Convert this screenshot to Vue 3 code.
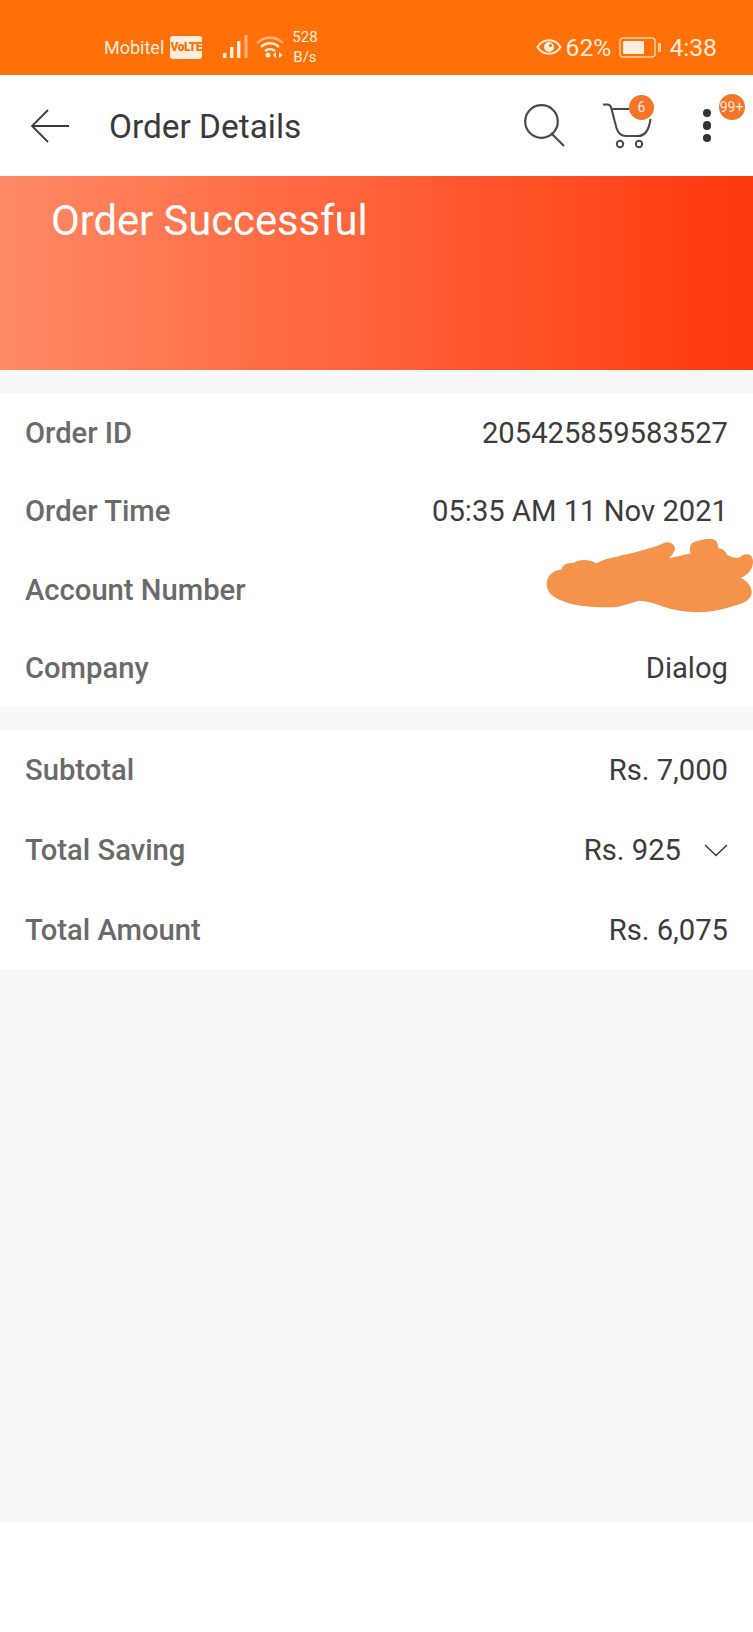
<script setup>
const card1 = [
  { label: 'Order ID', value: '205425859583527', h: 79 },
  { label: 'Order Time', value: '05:35 AM 11 Nov 2021', h: 78 },
  { label: 'Account Number', value: '', h: 79 },
  { label: 'Company', value: 'Dialog', h: 78 },
]
const card2 = [
  { label: 'Subtotal', value: 'Rs. 7,000', h: 80 },
  { label: 'Total Saving', value: 'Rs. 925', h: 80, chevron: true },
  { label: 'Total Amount', value: 'Rs. 6,075', h: 79 },
]
</script>

<template>
  <div class="page">
    <header class="status">
      <div class="status-left">
        <span class="carrier">Mobitel</span>
        <span class="volte">VoLTE</span>
        <svg class="signal" width="25" height="24" viewBox="0 0 25 24">
          <rect x="0" y="18" width="3.400" height="5" fill="#ffeedd" />
          <rect x="7" y="12" width="3.400" height="11" fill="#ffeedd" />
          <rect x="14" y="6" width="3.400" height="17" fill="#ffeedd" />
          <rect x="21.500" y="0" width="3" height="23" fill="#ffb27a" />
        </svg>
        <svg class="wifi" width="28" height="24" viewBox="0 0 28 24" fill="none">
          <path d="M1 8 C8 1 20 1 27 8" stroke="#ffb27a" stroke-width="2.400" />
          <path d="M5 12 C10 7 18 7 23 12" stroke="#ffeedd" stroke-width="2.400" />
          <path d="M9 16 C12 13.500 16 13.500 19 16" stroke="#ffeedd" stroke-width="2.400" />
          <circle cx="12" cy="20" r="2.500" fill="#ffeedd" />
          <path d="M20 17 L17 20 L20 23 Z" fill="#ffeedd" />
          <path d="M23 17 L26.500 20 L23 23 Z" fill="#ffeedd" />
        </svg>
        <span class="speed">528<br />B/s</span>
      </div>
      <div class="status-right">
        <svg class="eye" width="26" height="20" viewBox="0 0 26 20" fill="none">
          <path d="M1.500 10 C7 1 19 1 24.500 10 C19 19 7 19 1.500 10 Z" stroke="#ffeedd" stroke-width="2" />
          <circle cx="13" cy="10" r="5" fill="#ffeedd" />
          <circle cx="14.500" cy="8.500" r="1.600" fill="#ff7108" />
        </svg>
        <span class="pct">62%</span>
        <svg class="battery" width="42" height="21" viewBox="0 0 42 21" fill="none">
          <rect x="1" y="1" width="35" height="19" rx="3" stroke="#ffd3ad" stroke-width="1.400" />
          <rect x="4" y="4" width="21" height="13" rx="1" fill="#ffeedd" />
          <rect x="39" y="6" width="3" height="9" rx="1" fill="#ffd3ad" />
        </svg>
        <span class="time">4:38</span>
      </div>
    </header>

    <nav class="nav">
      <div class="nav-left">
        <svg class="back" width="40" height="34" viewBox="0 0 40 34" fill="none">
          <path d="M18 1 L2 17 L18 33 M2 17 H39" stroke="#3a3a3a" stroke-width="1.800" />
        </svg>
        <h1 class="title">Order Details</h1>
      </div>
      <div class="nav-right">
        <svg class="search" width="41" height="43" viewBox="0 0 41 43" fill="none">
          <circle cx="17.500" cy="17.500" r="16.300" stroke="#4a4a4a" stroke-width="2.200" />
          <path d="M27 29 L40 42" stroke="#4a4a4a" stroke-width="2.200" />
        </svg>
        <div class="cart">
          <svg width="49" height="46" viewBox="0 0 49 46" fill="none">
            <path d="M0 1.500 H4 C6.500 1.500 8 3 8.500 6 L13.500 25 C15 30 18 33 23 33 H35 C42 33 46 27 47.500 16" stroke="#4a4a4a" stroke-width="2.100" />
            <path d="M8.500 6 H26" stroke="#4a4a4a" stroke-width="2.100" />
            <circle cx="17" cy="41" r="3.200" stroke="#4a4a4a" stroke-width="2" />
            <circle cx="36" cy="41" r="3.200" stroke="#4a4a4a" stroke-width="2" />
          </svg>
          <span class="badge cart-badge">6</span>
        </div>
        <div class="more">
          <span class="dot"></span>
          <span class="dot"></span>
          <span class="dot"></span>
          <span class="badge more-badge">99+</span>
        </div>
      </div>
    </nav>

    <section class="banner">Order Successful</section>

    <section class="card first">
      <div v-for="r in card1" :key="r.label" class="row" :style="{ height: r.h + 'px' }">
        <span class="label">{{ r.label }}</span>
        <span v-if="r.value" class="value">{{ r.value }}</span>
      </div>
      <svg class="scribble" width="253" height="120" viewBox="0 0 759 360">
        <path fill="#f4934c" d="M140 220 C142 195 160 182 185 178 C188 160 205 160 222 158 C240 146 270 148 290 160 C310 148 330 143 350 140 C400 128 450 118 498 97 C515 95 528 108 524 120 C520 132 512 140 505 145 C528 141 550 136 572 130 C566 112 572 96 592 93 C610 88 640 80 650 95 C656 105 654 112 655 115 C668 116 678 124 680 134 C695 142 708 146 720 142 C735 126 759 130 759 155 C759 178 742 196 722 203 C745 215 760 235 754 255 C745 275 725 282 700 288 C660 300 620 310 580 306 C550 305 520 300 490 290 C465 280 440 272 415 272 C390 280 360 292 330 292 C290 292 250 290 215 282 C185 275 160 262 150 250 C142 240 140 230 140 220 Z" />
      </svg>
    </section>

    <section class="card second">
      <div v-for="r in card2" :key="r.label" class="row" :style="{ height: r.h + 'px' }">
        <span class="label">{{ r.label }}</span>
        <span class="value value-wrap">
          {{ r.value }}
          <svg v-if="r.chevron" class="chevron" width="24" height="14" viewBox="0 0 24 14" fill="none">
            <path d="M1 2 L12 12.500 L23 2" stroke="#3a3a3a" stroke-width="1.500" />
          </svg>
        </span>
      </div>
    </section>

    <div class="fill"></div>
    <div class="bottom"></div>
  </div>
</template>

<style scoped>
.page {
  width: 753px;
  height: 1632px;
  background: #f8f8f8;
  font-family: Roboto, "Liberation Sans", sans-serif;
  display: flex;
  flex-direction: column;
  overflow: hidden;
}
.status {
  height: 75px;
  box-sizing: border-box;
  flex: none;
  background: #ff7108;
  color: #ffeedd;
  display: flex;
  justify-content: space-between;
  align-items: center;
  padding: 19px 36px 0 104px;
}
.status-left,
.status-right {
  display: flex;
  align-items: center;
}
.carrier {
  font-size: 18px;
}
.volte {
  margin-left: 6px;
  width: 32px;
  height: 23px;
  background: #ffeedd;
  color: #ff7108;
  border-radius: 3px;
  font-size: 12px;
  font-weight: 900;
  letter-spacing: -0.500px;
  line-height: 23px;
  text-align: center;
}
.signal {
  margin-left: 21px;
}
.wifi {
  margin-left: 8px;
}
.speed {
  margin-left: 8px;
  font-size: 15px;
  line-height: 20px;
  text-align: center;
}
.eye {
  margin-right: 4px;
}
.pct {
  font-size: 24.700px;
}
.battery {
  margin: 0 8px 0 8px;
}
.time {
  font-size: 24.700px;
}
.nav {
  height: 101px;
  flex: none;
  background: #fff;
  display: flex;
  justify-content: space-between;
  align-items: center;
}
.nav-left {
  display: flex;
  align-items: center;
  padding-left: 30px;
}
.title {
  margin: 2px 0 0 39px;
  font-size: 33.400px;
  font-weight: 400;
  color: #3a3a3a;
}
.nav-right {
  display: flex;
  align-items: center;
  padding-right: 42px;
}
.cart {
  position: relative;
  margin-left: 38px;
  height: 46px;
}
.badge {
  position: absolute;
  border-radius: 50%;
  width: 25px;
  height: 25px;
  background: #f4742a;
  color: #ffe9dc;
  font-size: 14px;
  line-height: 25px;
  text-align: center;
}
.cart-badge {
  top: -8px;
  left: 26.500px;
}
.more {
  margin-left: 51px;
  width: 8.500px;
  display: flex;
  flex-direction: column;
  gap: 4px;
  position: relative;
}
.dot {
  width: 8.500px;
  height: 8.500px;
  border-radius: 50%;
  background: #333;
}
.more-badge {
  top: -15px;
  left: 16px;
  width: 26px;
  height: 26px;
  line-height: 26px;
}
.banner {
  height: 194px;
  flex: none;
  box-sizing: border-box;
  padding: 16px 0 0 51px;
  font-size: 41.700px;
  line-height: 58px;
  color: #fff;
  background: linear-gradient(90deg, #ff8a65 0%, #ff380c 100%);
}
.card {
  background: #fff;
  flex: none;
  position: relative;
}
.first {
  margin-top: 23px;
}
.second {
  margin-top: 23px;
}
.row {
  display: flex;
  justify-content: space-between;
  align-items: center;
  padding: 0 25px;
  font-size: 29.200px;
}
.label {
  color: #6a6a6a;
  font-weight: 500;
}
.value {
  color: #3c3c3c;
}
.value-wrap {
  display: flex;
  align-items: center;
}
.chevron {
  margin-left: 23px;
}
.scribble {
  position: absolute;
  top: 117px;
  left: 500px;
}
.fill {
  flex: none;
  height: 553px;
}
.bottom {
  flex: 1;
  background: #fff;
}
</style>

<style>
body {
  margin: 0;
}
</style>
